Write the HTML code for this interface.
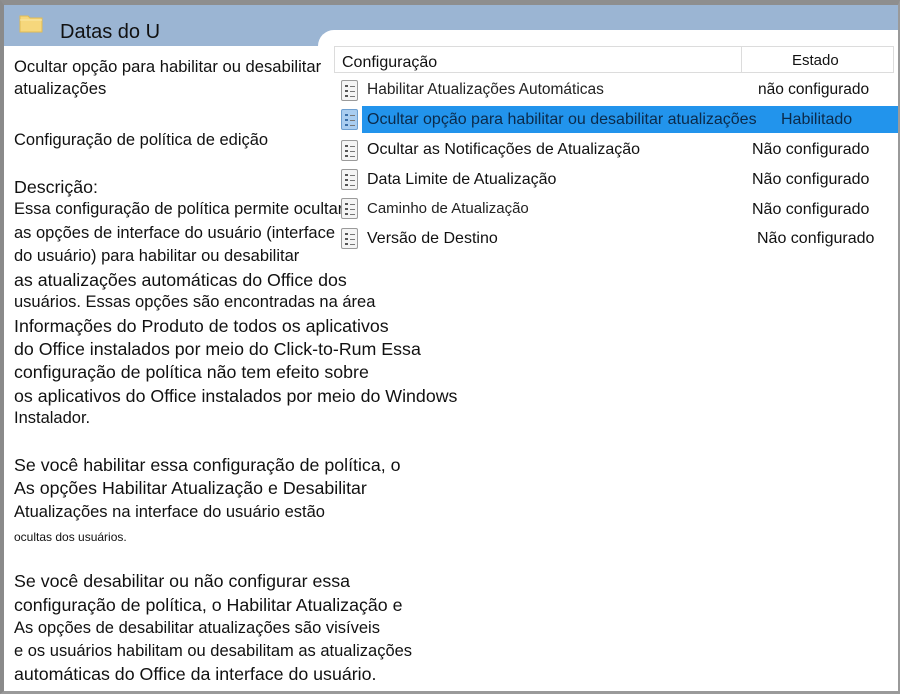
<!DOCTYPE html>
<html><head><meta charset="utf-8"><style>
*{margin:0;padding:0;box-sizing:border-box}
body{width:900px;height:694px;overflow:hidden;background:#fff;font-family:"Liberation Sans",Arial,sans-serif;color:#111;position:relative}
.frame{position:absolute;left:0;top:0;width:900px;height:694px;border-left:4px solid #8a8a8a;border-top:5px solid #8e8e8e;border-right:2px solid #9a9a9a;border-bottom:3px solid #9a9a9a}
.hdr{position:absolute;left:4px;top:5px;width:894px;height:41px;background:#9bb5d3}
.panel{position:absolute;left:318px;top:30px;width:590px;height:40px;background:#fff;border-top-left-radius:16px}
.t{position:absolute;left:14px;white-space:nowrap;line-height:1}
.a{font-size:16.5px}.b{font-size:17.8px}
.th{position:absolute;top:46px;height:27px;left:334px;width:560px;border:1px solid #dcdcdc;background:#fff}
.th .d{position:absolute;left:406px;top:0;height:26px;border-left:1px solid #dcdcdc}
.r{position:absolute;white-space:nowrap;font-size:16px;line-height:1}
.ic{position:absolute;left:341px;width:17px;height:21px;background:#f4f4f4;border:1px solid #9a9a9a;border-radius:2px}
.ic i{position:absolute;left:3px;width:3px;height:2px;background:#555}
.ic b{position:absolute;left:8px;width:5px;height:1px;background:#777}
.sel{position:absolute;left:362px;top:106px;width:538px;height:27px;background:#2294ec}
</style></head><body>
<div class="hdr"></div>
<div class="panel"></div>
<svg style="position:absolute;left:18px;top:13px" width="26" height="22"><path d="M2 3 h8 l2 2 h12 v14 h-22z" fill="#f6d77c" stroke="#e0bb55"/><path d="M2 7 h22" stroke="#fbe8a8"/></svg>
<div class="t" style="left:60px;top:22px;font-size:20px">Datas do U</div>

<div class="t" style="top:59px;font-size:16.6px">Ocultar opção para habilitar ou desabilitar</div>
<div class="t" style="top:81px;font-size:16.6px">atualizações</div>
<div class="t" style="top:132px;font-size:16.5px">Configuração de política de edição</div>
<div class="t b" style="top:179px">Descrição:</div>
<div class="t a" style="top:201px">Essa configuração de política permite ocultar</div>
<div class="t a" style="top:225px">as opções de interface do usuário (interface</div>
<div class="t a" style="top:248px">do usuário) para habilitar ou desabilitar</div>
<div class="t b" style="top:272px">as atualizações automáticas do Office dos</div>
<div class="t a" style="top:294px">usuários. Essas opções são encontradas na área</div>
<div class="t b" style="top:318px">Informações do Produto de todos os aplicativos</div>
<div class="t b" style="top:341px">do Office instalados por meio do Click-to-Rum Essa</div>
<div class="t b" style="top:364px">configuração de política não tem efeito sobre</div>
<div class="t b" style="top:388px">os aplicativos do Office instalados por meio do Windows</div>
<div class="t a" style="top:410px">Instalador.</div>
<div class="t b" style="top:457px">Se você habilitar essa configuração de política, o</div>
<div class="t b" style="top:480px">As opções Habilitar Atualização e Desabilitar</div>
<div class="t a" style="top:504px">Atualizações na interface do usuário estão</div>
<div class="t" style="top:531px;font-size:12px">ocultas dos usuários.</div>
<div class="t b" style="top:573px">Se você desabilitar ou não configurar essa</div>
<div class="t b" style="top:597px">configuração de política, o Habilitar Atualização e</div>
<div class="t a" style="top:620px">As opções de desabilitar atualizações são visíveis</div>
<div class="t a" style="top:643px">e os usuários habilitam ou desabilitam as atualizações</div>
<div class="t b" style="top:666px">automáticas do Office da interface do usuário.</div>

<div class="th"><div class="d"></div></div>
<div class="r" style="left:342px;top:55px">Configuração</div>
<div class="r" style="left:792px;top:53px;font-size:15px">Estado</div>

<div class="sel"></div>

<div class="ic" style="top:80px"><i style="top:4px"></i><b style="top:5px"></b><i style="top:9px"></i><b style="top:10px"></b><i style="top:14px"></i><b style="top:15px"></b></div>
<div class="ic" style="top:109px;background:#a9cdf0;border-color:#6d9fd0"><i style="top:4px;background:#3a6fa8"></i><b style="top:5px"></b><i style="top:9px;background:#3a6fa8"></i><b style="top:10px"></b><i style="top:14px;background:#3a6fa8"></i><b style="top:15px"></b></div>
<div class="ic" style="top:140px"><i style="top:4px"></i><b style="top:5px"></b><i style="top:9px"></i><b style="top:10px"></b><i style="top:14px"></i><b style="top:15px"></b></div>
<div class="ic" style="top:169px"><i style="top:4px"></i><b style="top:5px"></b><i style="top:9px"></i><b style="top:10px"></b><i style="top:14px"></i><b style="top:15px"></b></div>
<div class="ic" style="top:198px"><i style="top:4px"></i><b style="top:5px"></b><i style="top:9px"></i><b style="top:10px"></b><i style="top:14px"></i><b style="top:15px"></b></div>
<div class="ic" style="top:228px"><i style="top:4px"></i><b style="top:5px"></b><i style="top:9px"></i><b style="top:10px"></b><i style="top:14px"></i><b style="top:15px"></b></div>

<div class="r" style="left:367px;top:82px;font-size:15.5px;color:#222">Habilitar Atualizações Automáticas</div>
<div class="r" style="left:758px;top:82px;font-size:15.5px">não configurado</div>
<div class="r" style="left:367px;top:112px;font-size:16px;color:#0b2a4a">Ocultar opção para habilitar ou desabilitar atualizações</div>
<div class="r" style="left:781px;top:112px;font-size:16px;color:#0b2a4a">Habilitado</div>
<div class="r" style="left:367px;top:142px">Ocultar as Notificações de Atualização</div>
<div class="r" style="left:752px;top:142px">Não configurado</div>
<div class="r" style="left:367px;top:172px">Data Limite de Atualização</div>
<div class="r" style="left:752px;top:172px">Não configurado</div>
<div class="r" style="left:367px;top:201px;font-size:15px;color:#222">Caminho de Atualização</div>
<div class="r" style="left:752px;top:202px">Não configurado</div>
<div class="r" style="left:367px;top:231px">Versão de Destino</div>
<div class="r" style="left:757px;top:231px">Não configurado</div>

<div class="frame"></div>
</body></html>
